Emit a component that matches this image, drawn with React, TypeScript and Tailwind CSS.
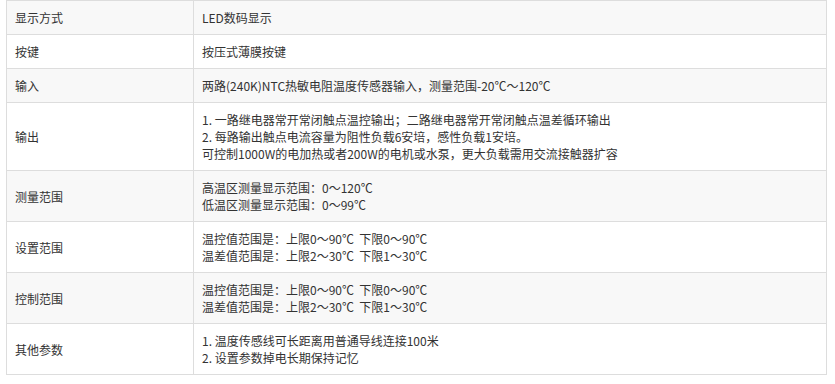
import React from "react";

const rows: { k: string; v: string[] }[] = [
  { k: "显示方式", v: ["LED数码显示"] },
  { k: "按键", v: ["按压式薄膜按键"] },
  { k: "输入", v: ["两路(240K)NTC热敏电阻温度传感器输入，测量范围-20℃～120℃"] },
  {
    k: "输出",
    v: [
      "1. 一路继电器常开常闭触点温控输出；二路继电器常开常闭触点温差循环输出",
      "2. 每路输出触点电流容量为阻性负载6安培，感性负载1安培。",
      "可控制1000W的电加热或者200W的电机或水泵，更大负载需用交流接触器扩容",
    ],
  },
  { k: "测量范围", v: ["高温区测量显示范围：0～120℃", "低温区测量显示范围：0～99℃"] },
  { k: "设置范围", v: ["温控值范围是：上限0～90℃  下限0～90℃", "温差值范围是：上限2～30℃  下限1～30℃"] },
  { k: "控制范围", v: ["温控值范围是：上限0～90℃  下限0～90℃", "温差值范围是：上限2～30℃  下限1～30℃"] },
  { k: "其他参数", v: ["1. 温度传感线可长距离用普通导线连接100米", "2. 设置参数掉电长期保持记忆"] },
];

export default function App() {
  return (
    <div className="w-[835px] h-[384px] bg-white overflow-hidden" style={{ fontFamily: '"Noto Sans CJK SC", "Liberation Sans", sans-serif' }}>
      <table className="ml-[6px] w-[821px] border-collapse text-[12px] leading-[17px] text-[#333333]">
        <tbody>
          {rows.map((r, i) => (
            <tr key={i} className={i % 2 === 0 ? "bg-[#f8f8f8]" : "bg-white"}>
              <td className="w-[187px] border border-[#dddddd] px-[8px] py-[8px] align-middle">{r.k}</td>
              <td className="border border-[#dddddd] px-[8px] py-[8px] align-middle">
                {r.v.map((l, j) => (
                  <div key={j} className="whitespace-pre">{l}</div>
                ))}
              </td>
            </tr>
          ))}
        </tbody>
      </table>
    </div>
  );
}
